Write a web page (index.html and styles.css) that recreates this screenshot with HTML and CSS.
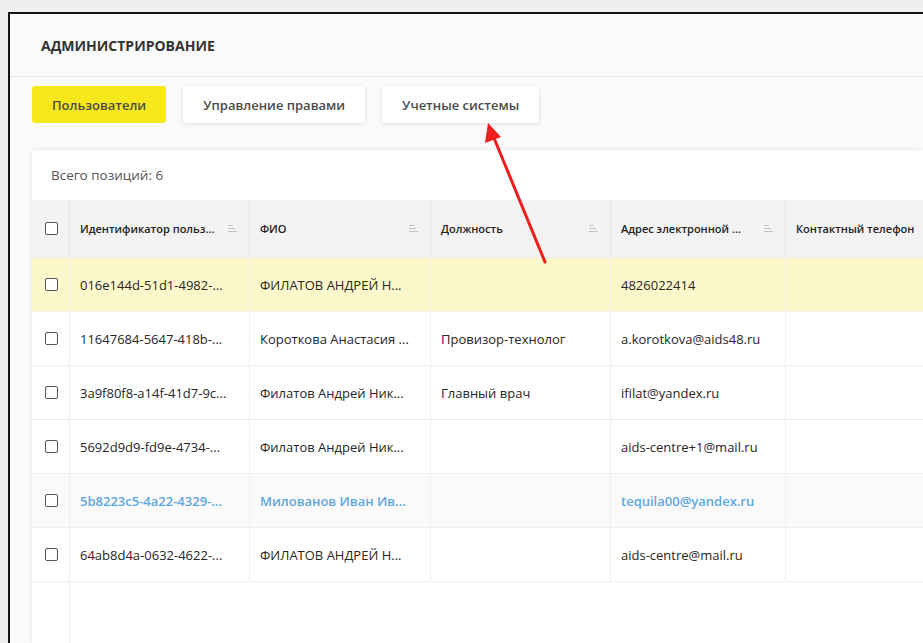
FILE: index.html
```html
<!DOCTYPE html>
<html lang="ru">
<head>
<meta charset="utf-8">
<title>Администрирование</title>
<link rel="stylesheet" href="styles.css">
</head>
<body>
<div class="screen">
  <div class="frame">
    <header class="page-head">
      <h1 class="page-title">АДМИНИСТРИРОВАНИЕ</h1>
    </header>

    <nav class="tabs">
      <button class="tab tab-active">Пользователи</button>
      <button class="tab">Управление правами</button>
      <button class="tab">Учетные системы</button>
    </nav>

    <section class="card">
      <div class="card-head">Всего позиций: 6</div>

      <div class="table">
        <div class="row row-head">
          <div class="cell cell-check"><span class="checkbox"></span></div>
          <div class="cell"><span class="cell-text">Идентификатор польз...</span><span class="sorter"></span></div>
          <div class="cell"><span class="cell-text">ФИО</span><span class="sorter"></span></div>
          <div class="cell"><span class="cell-text">Должность</span><span class="sorter"></span></div>
          <div class="cell"><span class="cell-text">Адрес электронной ...</span><span class="sorter"></span></div>
          <div class="cell"><span class="cell-text">Контактный телефон</span></div>
        </div>

        <div class="row row-marked">
          <div class="cell cell-check"><span class="checkbox"></span></div>
          <div class="cell">016e144d-51d1-4982-...</div>
          <div class="cell">ФИЛАТОВ АНДРЕЙ Н...</div>
          <div class="cell"></div>
          <div class="cell">4826022414</div>
          <div class="cell"></div>
        </div>

        <div class="row">
          <div class="cell cell-check"><span class="checkbox"></span></div>
          <div class="cell">11647684-5647-418b-...</div>
          <div class="cell">Короткова Анастасия ...</div>
          <div class="cell">Провизор-технолог</div>
          <div class="cell">a.korotkova@aids48.ru</div>
          <div class="cell"></div>
        </div>

        <div class="row">
          <div class="cell cell-check"><span class="checkbox"></span></div>
          <div class="cell">3a9f80f8-a14f-41d7-9c...</div>
          <div class="cell">Филатов Андрей Ник...</div>
          <div class="cell">Главный врач</div>
          <div class="cell">ifilat@yandex.ru</div>
          <div class="cell"></div>
        </div>

        <div class="row">
          <div class="cell cell-check"><span class="checkbox"></span></div>
          <div class="cell">5692d9d9-fd9e-4734-...</div>
          <div class="cell">Филатов Андрей Ник...</div>
          <div class="cell"></div>
          <div class="cell">aids-centre+1@mail.ru</div>
          <div class="cell"></div>
        </div>

        <div class="row row-hover">
          <div class="cell cell-check"><span class="checkbox"></span></div>
          <div class="cell">5b8223c5-4a22-4329-...</div>
          <div class="cell">Милованов Иван Ив...</div>
          <div class="cell"></div>
          <div class="cell">tequila00@yandex.ru</div>
          <div class="cell"></div>
        </div>

        <div class="row">
          <div class="cell cell-check"><span class="checkbox"></span></div>
          <div class="cell">64ab8d4a-0632-4622-...</div>
          <div class="cell">ФИЛАТОВ АНДРЕЙ Н...</div>
          <div class="cell"></div>
          <div class="cell">aids-centre@mail.ru</div>
          <div class="cell"></div>
        </div>

        <div class="table-fill"><div class="fill-check"></div></div>
      </div>
    </section>
  </div>

  <!-- pointer drawn over the page towards the third tab -->
  <svg class="pointer" width="923" height="643" viewBox="0 0 923 643">
    <line x1="545" y1="262" x2="494" y2="138" stroke="#f01d1d" stroke-width="3" stroke-linecap="round"/>
    <polygon points="488,123 485,143 501,137" fill="#f01d1d"/>
  </svg>
</div>
</body>
</html>
```

FILE: styles.css
```css
* {
  box-sizing: border-box;
}

html, body {
  margin: 0;
  height: 100%;
}

body {
  background: #efefef;
  font-family: "Open Sans", "Noto Sans", sans-serif;
  color: #2b2b2b;
  overflow: hidden;
}

.screen {
  position: relative;
  height: 100%;
  padding: 12px 0 0 8px;
  display: flex;
  flex-direction: column;
}

.frame {
  flex: 1;
  display: flex;
  flex-direction: column;
  background: #fafafa;
  border-top: 2px solid #151515;
  border-left: 2px solid #151515;
  overflow: hidden;
  min-height: 0;
}

.page-head {
  height: 63px;
  flex: none;
  display: flex;
  align-items: center;
  padding-left: 31px;
  border-bottom: 1px solid #e6e6e6;
}

.page-title {
  margin: 0;
  font-size: 14px;
  font-weight: 700;
  color: #333;
}

.tabs {
  flex: none;
  display: flex;
  gap: 17px;
  padding: 9px 0 0 22px;
}

.tab {
  height: 37px;
  padding: 0 20px;
  border: none;
  border-radius: 3px;
  background: #fff;
  box-shadow: 0 1px 4px rgba(0, 0, 0, 0.12);
  font-family: inherit;
  font-size: 13px;
  font-weight: 600;
  color: #4a4a4a;
  cursor: pointer;
}

.tab-active {
  background: #f7e81c;
  box-shadow: none;
}

.card {
  flex: 1;
  margin: 27px 0 0 22px;
  background: #fff;
  box-shadow: 0 0 4px rgba(0, 0, 0, 0.1);
  display: flex;
  flex-direction: column;
  min-height: 0;
}

.card-head {
  flex: none;
  height: 50px;
  padding: 16px 0 0 19px;
  font-size: 13.5px;
  color: #555;
}

.table {
  flex: 1;
  display: flex;
  flex-direction: column;
  min-height: 0;
}

.row {
  flex: none;
  display: grid;
  grid-template-columns: 38px 180px 181px 180px 175px 200px;
  height: 54px;
  border-bottom: 1px solid #f0f0f0;
  font-size: 13px;
  color: #262626;
}

.row-head {
  height: 58px;
  background: #f3f3f3;
  font-size: 11px;
  font-weight: 600;
  color: #222;
  border-bottom: 1px solid #ececec;
}

.row-marked {
  background: #fcf8cb;
}

.row-hover {
  background: #fafafa;
  color: #5aa8e2;
  font-weight: 600;
}

.cell {
  display: flex;
  align-items: center;
  justify-content: space-between;
  padding: 0 12px 0 10px;
  border-right: 1px solid #efefef;
  white-space: nowrap;
  overflow: hidden;
}

.row-head .cell {
  border-right-color: #e6e6e6;
}

.cell-check {
  justify-content: flex-start;
  padding: 0 0 0 13px;
}

.checkbox {
  width: 13px;
  height: 13px;
  border: 1.6px solid #555;
  border-radius: 2px;
  background: #fff;
}

.sorter {
  width: 9px;
  height: 7px;
  flex: none;
  margin-left: 6px;
  background:
    linear-gradient(#c4c4c4, #c4c4c4) 0 0 / 5px 1px no-repeat,
    linear-gradient(#c4c4c4, #c4c4c4) 0 3px / 7px 1px no-repeat,
    linear-gradient(#c4c4c4, #c4c4c4) 0 6px / 9px 1px no-repeat;
}

.table-fill {
  flex: 1;
  display: flex;
}

.fill-check {
  width: 38px;
  border-right: 1px solid #efefef;
}

.pointer {
  position: absolute;
  left: 0;
  top: 0;
  pointer-events: none;
}
```
